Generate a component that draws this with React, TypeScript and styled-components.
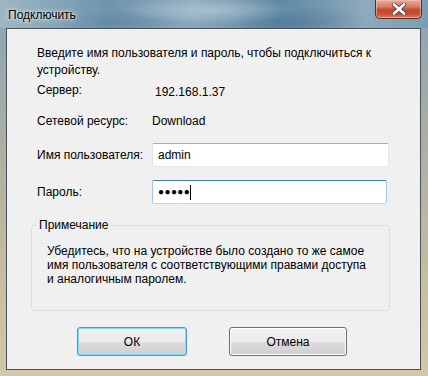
import React from "react";
import styled, { createGlobalStyle } from "styled-components";

const Global = createGlobalStyle`
  html, body { margin: 0; padding: 0; background: #cfc4a3; }
  body { font-family: "Liberation Sans", Arial, sans-serif; }
`;

const Window = styled.div`
  width: 428px;
  height: 376px;
  box-sizing: border-box;
  display: flex;
  flex-direction: column;
  padding: 0 7px 6px 6px;
  background:
    radial-gradient(ellipse 90px 14px at 210px 10px, rgba(200,215,225,0.55), transparent),
    radial-gradient(ellipse 70px 16px at 300px 22px, rgba(70,110,140,0.45), transparent),
    radial-gradient(ellipse 60px 12px at 120px 22px, rgba(80,120,150,0.4), transparent),
    linear-gradient(to right, #9fb6c4 0%, #6f95ad 25%, #8aa8bb 45%, #5d87a3 65%, #8eaabc 85%, #7b9db3 100%);
  background-size: 100% 30px, 100% 30px, 100% 30px, 100% 100%;
  background-repeat: no-repeat;
  position: relative;
  overflow: hidden;
  &::before {
    content: "";
    position: absolute;
    left: 0; right: 0; top: 28px; bottom: 0;
    background: linear-gradient(to bottom, #8ea6b3 0%, #a9aea3 30%, #c6bc9f 70%, #d2c7a8 100%);
    z-index: 0;
  }
`;

const TitleBar = styled.div`
  height: 28px;
  display: flex;
  align-items: flex-start;
  justify-content: space-between;
  position: relative;
  z-index: 1;
`;

const Title = styled.div`
  margin: 8px 0 0 2px;
  font-size: 12px;
  color: #000;
  text-shadow: 0 0 6px rgba(255,255,255,0.9), 0 0 3px rgba(255,255,255,0.8);
`;

const CloseButton = styled.div`
  width: 47px;
  height: 19px;
  margin-right: -1px;
  box-sizing: border-box;
  border: 1px solid #5b2a22;
  border-top: none;
  border-radius: 0 0 5px 5px;
  background: linear-gradient(to bottom, #e9a99a 0%, #d9816c 35%, #c5472c 55%, #c9513a 80%, #de7e62 100%);
  box-shadow: inset 0 0 0 1px rgba(255,210,200,0.5);
  display: flex;
  align-items: center;
  justify-content: center;
`;

const Client = styled.div`
  flex: 1;
  position: relative;
  z-index: 1;
  background: #f0f0f0;
  border: 1px solid #4b5259;
  display: flex;
  flex-direction: column;
  padding: 16px 0 0 30px;
  font-size: 12px;
  color: #000;
`;

const Intro = styled.div`
  line-height: 17px;
  width: 370px;
`;

const Row = styled.div<{ $top: number; $h: number }>`
  display: flex;
  align-items: center;
  height: ${p => p.$h}px;
  margin-top: ${p => p.$top}px;
`;

const Label = styled.div`
  width: 115px;
  flex: none;
`;

const Value = styled.div<{ $dy?: number; $dx?: number }>`
  position: relative;
  top: ${p => p.$dy ?? 0}px;
  left: ${p => p.$dx ?? 0}px;
`;

const Field = styled.div<{ $w: number; $focus?: boolean }>`
  width: ${p => p.$w}px;
  height: 24px;
  box-sizing: border-box;
  background: #fff;
  border: 1px solid ${p => (p.$focus ? "#a4c9e3" : "#e2e3ea")};
  border-top-color: ${p => (p.$focus ? "#3d7bad" : "#abadb3")};
  border-bottom-color: ${p => (p.$focus ? "#b7d9ed" : "#e3e9ef")};
  border-radius: 2px;
  display: flex;
  align-items: center;
  padding-left: 5px;
  font-size: 12px;
`;

const Dots = styled.span`
  font-size: 10px;
  letter-spacing: 0.4px;
  line-height: 1;
`;

const Caret = styled.span`
  width: 1px;
  height: 15px;
  background: #000;
`;

const Group = styled.div`
  margin: 21px 0 0 -6px;
  width: 359px;
  height: 86px;
  box-sizing: border-box;
  border: 1px solid #d5dfe5;
  border-radius: 3px;
  position: relative;
  padding: 18px 0 0 15px;
`;

const Legend = styled.div`
  position: absolute;
  left: 5px;
  top: -8px;
  padding: 0 2px 0 2px;
  background: #f0f0f0;
  line-height: 15px;
`;

const Note = styled.div`
  line-height: 14px;
`;

const Buttons = styled.div`
  display: flex;
  gap: 42px;
  margin: 16px 0 0 40px;
`;

const Button = styled.div<{ $w: number; $default?: boolean }>`
  width: ${p => p.$w}px;
  height: 29px;
  box-sizing: border-box;
  border: 1px solid ${p => (p.$default ? "#3c9ad8" : "#707070")};
  border-radius: 3px;
  background: linear-gradient(to bottom, #f2f2f2 0%, #ebebeb 50%, #dddddd 50%, #cfcfcf 100%);
  box-shadow: inset 0 0 0 1px ${p => (p.$default ? "#7fdcfb" : "#fcfcfc")};
  display: flex;
  align-items: center;
  justify-content: center;
  font-size: 12px;
  color: #000;
`;

export default function App() {
  return (
    <>
      <Global />
      <Window>
        <TitleBar>
          <Title>Подключить</Title>
          <CloseButton>
            <svg width="16" height="12" viewBox="0 0 16 12">
              <path d="M3 1.5 L13 10.5 M13 1.5 L3 10.5" stroke="#4a3a3a" strokeWidth="4.4" strokeLinecap="round" />
              <path d="M3 1.5 L13 10.5 M13 1.5 L3 10.5" stroke="#ffffff" strokeWidth="2.8" strokeLinecap="round" />
            </svg>
          </CloseButton>
        </TitleBar>
        <Client>
          <Intro>Введите имя пользователя и пароль, чтобы подключиться к устройству.</Intro>
          <Row $top={1} $h={20}>
            <Label>Сервер:</Label>
            <Value $dy={2} $dx={3}>192.168.1.37</Value>
          </Row>
          <Row $top={11} $h={20}>
            <Label>Сетевой ресурс:</Label>
            <Value>Download</Value>
          </Row>
          <Row $top={12} $h={24}>
            <Label>Имя пользователя:</Label>
            <Field $w={237}>admin</Field>
          </Row>
          <Row $top={13} $h={24}>
            <Label>Пароль:</Label>
            <Field $w={235} $focus>
              <Dots>●●●●●</Dots>
              <Caret />
            </Field>
          </Row>
          <Group>
            <Legend>Примечание</Legend>
            <Note>
              Убедитесь, что на устройстве было создано то же самое
              <br />
              имя пользователя с соответствующими правами доступа
              <br />
              и аналогичным паролем.
            </Note>
          </Group>
          <Buttons>
            <Button $w={110} $default>ОК</Button>
            <Button $w={118}>Отмена</Button>
          </Buttons>
        </Client>
      </Window>
    </>
  );
}
